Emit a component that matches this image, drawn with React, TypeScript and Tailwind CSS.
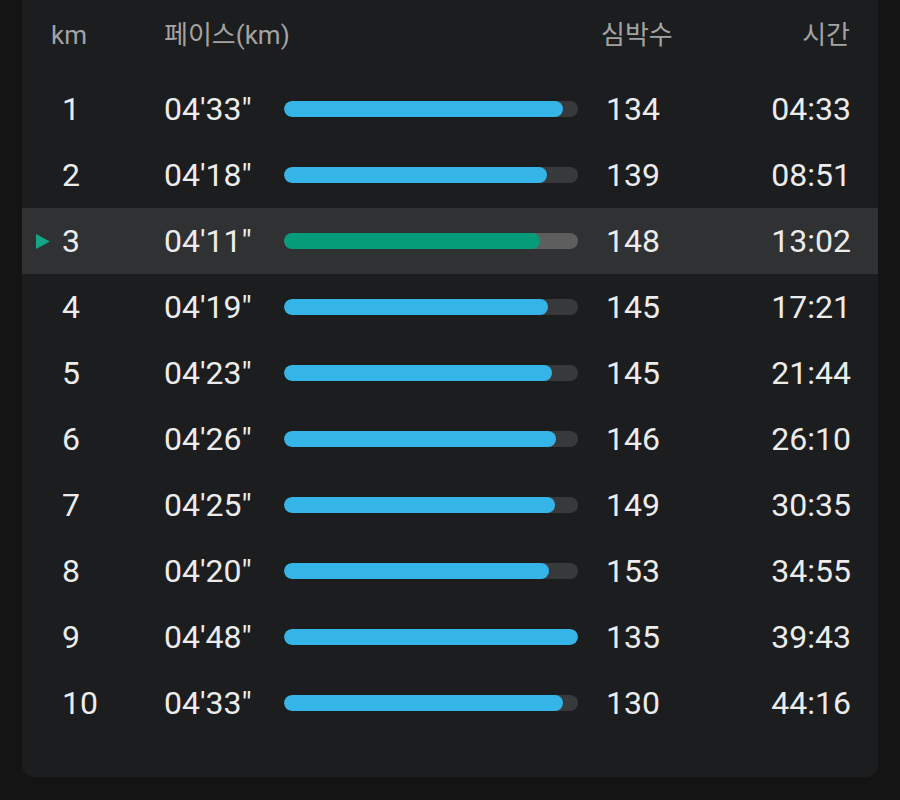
const laps = [
  { km: 1, pace: "04'33\"", sec: 273, hr: 134, time: "04:33" },
  { km: 2, pace: "04'18\"", sec: 258, hr: 139, time: "08:51" },
  { km: 3, pace: "04'11\"", sec: 251, hr: 148, time: "13:02" },
  { km: 4, pace: "04'19\"", sec: 259, hr: 145, time: "17:21" },
  { km: 5, pace: "04'23\"", sec: 263, hr: 145, time: "21:44" },
  { km: 6, pace: "04'26\"", sec: 266, hr: 146, time: "26:10" },
  { km: 7, pace: "04'25\"", sec: 265, hr: 149, time: "30:35" },
  { km: 8, pace: "04'20\"", sec: 260, hr: 153, time: "34:55" },
  { km: 9, pace: "04'48\"", sec: 288, hr: 135, time: "39:43" },
  { km: 10, pace: "04'33\"", sec: 273, hr: 130, time: "44:16" },
];

const slowest = 288;
const activeKm = 3;

export default function App() {
  return (
    <div
      className="min-h-screen bg-[#141414] text-[#ececec] px-[22px] pb-[23px]"
      style={{ fontFamily: "Roboto, 'Noto Sans CJK KR', sans-serif" }}
    >
      <div className="bg-[#1c1d1f] rounded-b-xl pb-[41px]">
        {/* header */}
        <div className="flex items-center h-[76px] pb-[6px] text-[26px] text-[#a3a3a3]">
          <div className="w-[142px] pl-[29px]">km</div>
          <div className="w-[437px]">페이스(km)</div>
          <div className="flex-1">심박수</div>
          <div className="pr-[28px]">시간</div>
        </div>

        {laps.map((lap) => {
          const active = lap.km === activeKm;
          return (
            <div
              key={lap.km}
              className={`flex items-center h-[66px] text-[32px] ${active ? "bg-[#303133]" : ""}`}
            >
              <div className="w-[142px] flex items-center">
                <div className="w-[40px] pl-[13px] flex items-center">
                  {active && (
                    <svg width="17" height="17" viewBox="0 0 17 17" className="shrink-0">
                      <path d="M1 1 L15 8.5 L1 16 Z" fill="#12a586" />
                    </svg>
                  )}
                </div>
                <span>{lap.km}</span>
              </div>
              <div className="w-[120px]">{lap.pace}</div>
              <div
                className={`w-[294px] h-[16px] rounded-full overflow-hidden ${active ? "bg-[#5e5e5e]" : "bg-[#38393b]"}`}
              >
                <div
                  className={`h-full rounded-full ${active ? "bg-[#069c7a]" : "bg-[#35b4e7]"}`}
                  style={{ width: `${(lap.sec / slowest) * 100}%` }}
                />
              </div>
              <div className="w-[28px]" />
              <div className="flex-1">{lap.hr}</div>
              <div className="pr-[27px]">{lap.time}</div>
            </div>
          );
        })}
      </div>
    </div>
  );
}
